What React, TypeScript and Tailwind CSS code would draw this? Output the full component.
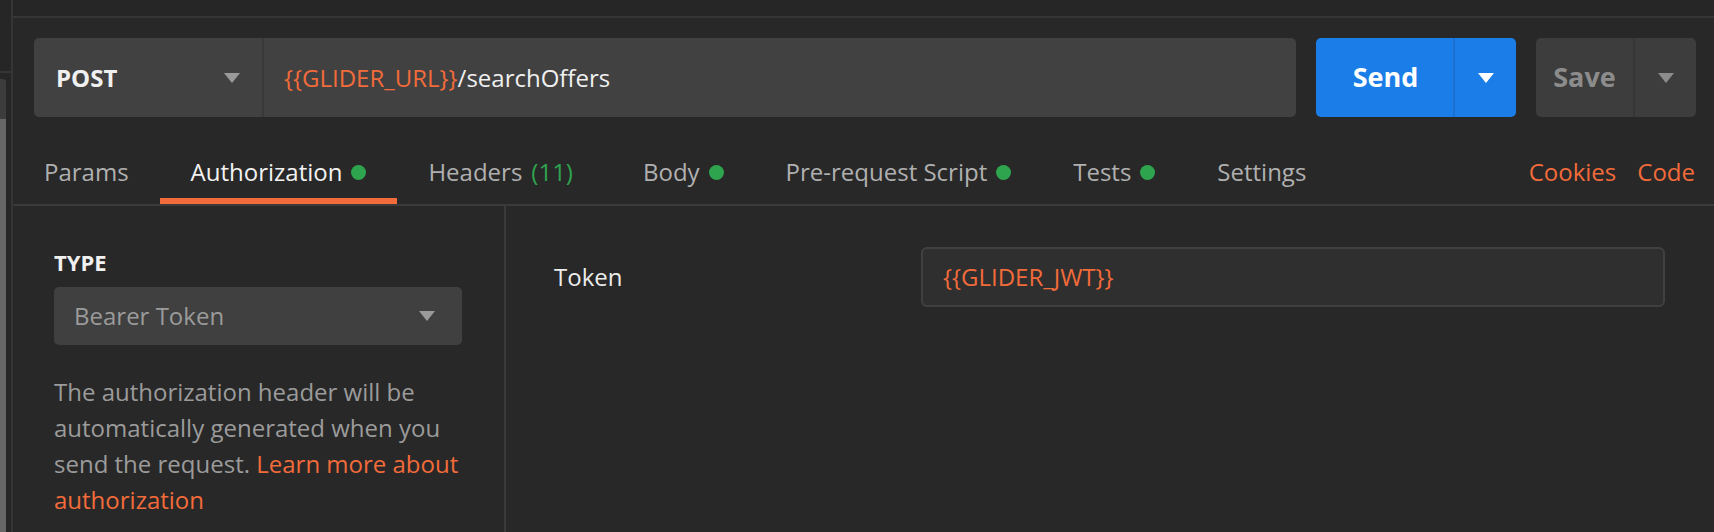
import React from 'react';

const ORANGE = 'text-[#f26b3a]';

function Caret({ className }: { className?: string }) {
  return (
    <svg width="16" height="10" viewBox="0 0 16 10" className={className}>
      <polygon points="0,0 16,0 8,10" fill="currentColor" />
    </svg>
  );
}

function Dot() {
  return <span className="ml-[9px] inline-block h-[15px] w-[15px] rounded-full bg-[#2ea44f]" />;
}

const tabs = [
  { label: 'Params' },
  { label: 'Authorization', dot: true, active: true },
  { label: 'Headers', count: '(11)' },
  { label: 'Body', dot: true },
  { label: 'Pre-request Script', dot: true },
  { label: 'Tests', dot: true },
  { label: 'Settings' },
];

export default function App() {
  return (
    <div
      className="flex h-[532px] w-[1714px] overflow-hidden bg-[#282828]"
      style={{ fontFamily: '"Open Sans", "Liberation Sans", sans-serif' }}
    >
      {/* Sidebar edge */}
      <div className="flex w-[13px] shrink-0 flex-col border-r-2 border-[#353535] bg-[#262626]">
        <div className="h-[73px] shrink-0 border-b-2 border-[#353535]" />
        <div className="mt-[6px] flex w-[6px] flex-1 flex-col rounded-tr-[3px] bg-[#3c3c3c]">
          <div className="mt-[40px] flex-1 bg-[#666666]" />
        </div>
      </div>

      <div className="flex min-w-0 flex-1 flex-col">
        <div className="h-[18px] shrink-0 border-b-2 border-[#363636] bg-[#262626]" />

        {/* Request bar */}
        <div className="mt-[20px] flex h-[79px] shrink-0 items-stretch pl-[21px] pr-[18px]">
          <div className="flex flex-1 overflow-hidden rounded-[5px] bg-[#414141]">
            <div className="flex w-[230px] items-center justify-between border-r-2 border-[#393939] pl-[22px] pr-[22px]">
              <span className="text-[24px] font-bold text-[#f0f0f0]">POST</span>
              <Caret className="text-[#9a9a9a]" />
            </div>
            <div className="flex items-center pl-[20px] text-[24px]">
              <span className={ORANGE}>{'{{GLIDER_URL}}'}</span>
              <span className="text-[#f0f0f0]">/searchOffers</span>
            </div>
          </div>

          <div className="ml-[20px] flex w-[200px] overflow-hidden rounded-[5px] bg-[#1b7ee8]">
            <div className="flex w-[139px] items-center justify-center border-r-2 border-[#1a71d2] pl-[2px] text-[27px] font-bold text-white">
              Send
            </div>
            <div className="flex flex-1 items-center justify-center">
              <Caret className="text-white" />
            </div>
          </div>

          <div className="ml-[20px] flex w-[160px] overflow-hidden rounded-[5px] bg-[#3d3d3d]">
            <div className="flex w-[99px] items-center justify-center border-r-2 border-[#363636] text-[27px] font-bold text-[#8c8c8c]">
              Save
            </div>
            <div className="flex flex-1 items-center justify-center">
              <Caret className="text-[#8c8c8c]" />
            </div>
          </div>
        </div>

        {/* Tabs */}
        <div className="flex h-[89px] shrink-0 items-stretch border-b-2 border-[#3a3a3a] text-[24px]">
          {tabs.map((t) => (
            <div
              key={t.label}
              className={`flex items-center border-b-[6px] pt-[29px] ${t.count ? 'pl-[31px] pr-[39px]' : 'px-[31px]'} ${
                t.active ? 'border-[#f26b3a] text-[#f2f2f2]' : 'border-transparent text-[#b0b0b0]'
              }`}
            >
              <span>{t.label}</span>
              {t.count && <span className="ml-[9px] text-[#2ea44f]">{t.count}</span>}
              {t.dot && <Dot />}
            </div>
          ))}
          <div className="ml-auto flex items-center gap-[21px] pr-[19px] pt-[29px] pb-[6px] text-[#f26b3a]">
            <span>Cookies</span>
            <span>Code</span>
          </div>
        </div>

        {/* Auth body */}
        <div className="flex flex-1">
          <div className="w-[493px] shrink-0 border-r-2 border-[#3a3a3a] pl-[41px] pt-[41px]">
            <div className="text-[22px] font-bold leading-[30px] text-[#f0f0f0]">TYPE</div>
            <div className="mt-[10px] flex h-[58px] w-[408px] items-center justify-between rounded-[5px] bg-[#404040] pl-[20px] pr-[27px]">
              <span className="text-[24px] text-[#9b9b9b]">Bearer Token</span>
              <Caret className="text-[#9a9a9a]" />
            </div>
            <p className="mt-[29px] w-[412px] text-[24px] leading-[36px] text-[#9b9b9b]">
              The authorization header will be automatically generated when you send the request.{' '}
              <span className={ORANGE}>Learn more about authorization</span>
            </p>
          </div>

          <div className="flex flex-1 items-start pl-[48px] pr-[49px] pt-[41px]">
            <div className="flex h-[60px] w-[367px] shrink-0 items-center text-[24px] text-[#ececec]">Token</div>
            <div className="flex h-[60px] flex-1 items-center rounded-[6px] border-2 border-[#404040] bg-[#2f2f2f] pl-[20px] text-[24px]">
              <span className={ORANGE}>{'{{GLIDER_JWT}}'}</span>
            </div>
          </div>
        </div>
      </div>
    </div>
  );
}
